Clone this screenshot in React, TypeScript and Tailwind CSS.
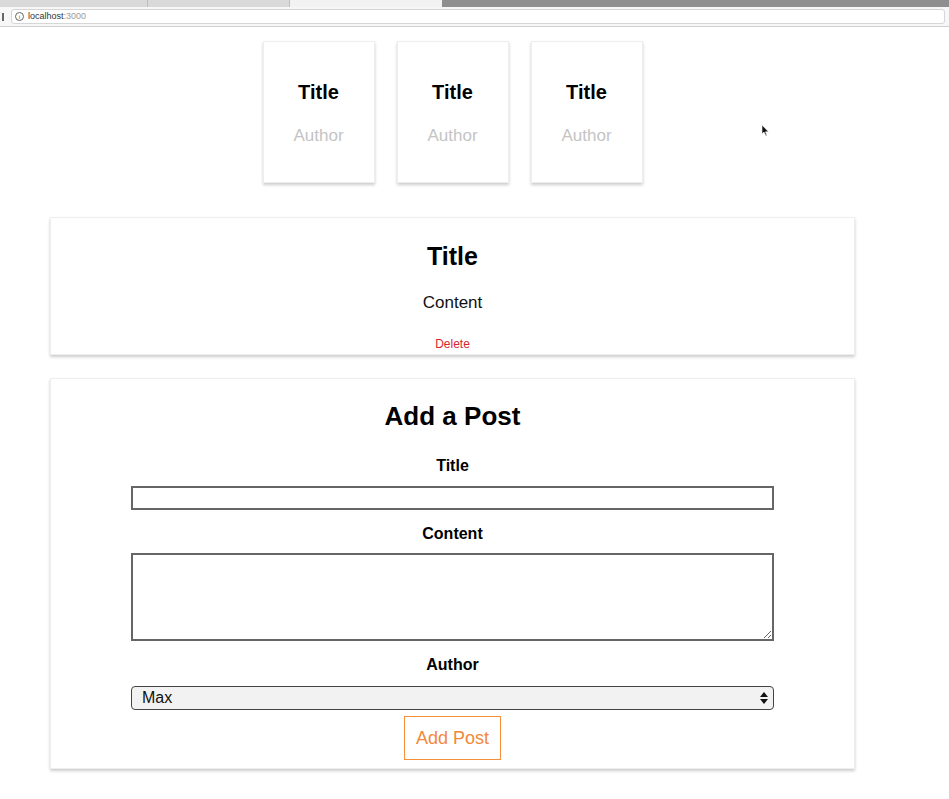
import React from 'react';

const font = { fontFamily: '"Liberation Sans", Arial, Helvetica, sans-serif' };

function BrowserBar() {
  return (
    <div className="w-full">
      <div className="flex h-[7px] bg-[#d4d4d4]">
        <div className="w-[148px] border-r border-[#bdbdbd] bg-[#d9d9d9]" />
        <div className="w-[142px] border-r border-[#bdbdbd] bg-[#d9d9d9]" />
        <div className="w-[152px] bg-[#f2f2f2]" />
        <div className="flex-1 bg-[#8f8f8f]" />
      </div>
      <div className="flex h-[19px] items-center bg-[#f7f7f7] pl-[2px] pr-[4px]">
        <div className="mr-[7px] h-[8px] w-[2px] bg-[#666]" />
        <div className="flex h-[15px] flex-1 items-center rounded-[3px] border border-[#d6d6d6] bg-white pl-[3px] text-[9px] leading-none">
          <span className="mr-[4px] flex h-[9px] w-[9px] items-center justify-center rounded-full border border-[#666] text-[6px] text-[#555]">i</span>
          <span className="text-[#333]">localhost</span>
          <span className="text-[#9a9a9a]">:3000</span>
        </div>
      </div>
      <div className="h-px bg-[#cfcfcf]" />
    </div>
  );
}

function PostCard({ title, author }: { title: string; author: string }) {
  return (
    <div className="flex h-[142px] w-[112px] flex-col items-center border border-[#eee] pt-[38px] shadow-[0_2px_3px_#ccc]">
      <div className="text-[20px] font-bold leading-[24px] text-black">{title}</div>
      <div className="mt-[22px] text-[17px] leading-[20px] text-[#c4c4c4]">{author}</div>
    </div>
  );
}

function FullPost() {
  return (
    <div className="flex w-[805px] flex-col items-center border border-[#eee] pt-[24px] pb-[3px] shadow-[0_2px_3px_#ccc]">
      <div className="text-[25px] font-bold leading-[28px] text-black">Title</div>
      <div className="mt-[23px] text-[17px] leading-[20px] text-[#111]">Content</div>
      <button className="mt-[24px] text-[12px] leading-[14px] text-[#d9232f]">Delete</button>
    </div>
  );
}

function NewPost() {
  return (
    <div className="flex w-[805px] flex-col items-center border border-[#eee] pt-[22px] pb-[8px] shadow-[0_2px_3px_#ccc]">
      <h1 className="text-[26px] font-bold leading-[30px] text-black">Add a Post</h1>
      <label className="mt-[26px] text-[16px] font-bold leading-[18px] text-black">Title</label>
      <input
        type="text"
        className="mt-[11px] h-[24px] w-[643px] border-2 border-[#666] bg-white px-1 outline-none"
      />
      <label className="mt-[15px] text-[16px] font-bold leading-[18px] text-black">Content</label>
      <textarea className="mt-[10px] block h-[88px] w-[643px] border-2 border-[#666] bg-white px-1 outline-none" />
      <label className="mt-[15px] text-[16px] font-bold leading-[18px] text-black">Author</label>
      <div className="relative mt-[12px] w-[643px]">
        <select className="block h-[24px] w-full appearance-none rounded-[4px] border border-[#444] bg-[#f2f2f2] pl-[10px] text-[16px] leading-[22px] text-[#111] outline-none">
          <option>Max</option>
          <option>Manu</option>
        </select>
        <svg className="pointer-events-none absolute right-[6px] top-[6px]" width="8" height="12" viewBox="0 0 8 12">
          <path d="M4 0 L8 5 H0 Z" fill="#111" />
          <path d="M0 7 H8 L4 12 Z" fill="#111" />
        </svg>
      </div>
      <button className="mt-[6px] h-[44px] w-[97px] border border-[#f7903c] text-[18px] text-[#f2883a]">
        Add Post
      </button>
    </div>
  );
}

export default function App() {
  return (
    <div className="relative min-h-[799px] w-[949px] bg-white" style={font}>
      <BrowserBar />
      <div className="w-[905px]">
        <section className="mt-[14px] flex justify-center gap-[22px]">
          <PostCard title="Title" author="Author" />
          <PostCard title="Title" author="Author" />
          <PostCard title="Title" author="Author" />
        </section>
        <section className="mt-[34px] flex justify-center">
          <FullPost />
        </section>
        <section className="mt-[23px] flex justify-center">
          <NewPost />
        </section>
      </div>
      <svg className="absolute left-[761px] top-[125px]" width="8" height="12" viewBox="0 0 8 12">
        <path d="M1 0 L1 9 L3 7 L5 11 L6 10.5 L4.5 6.8 L7.5 6.8 Z" fill="#111" stroke="#fff" strokeWidth="0.6" />
      </svg>
    </div>
  );
}
